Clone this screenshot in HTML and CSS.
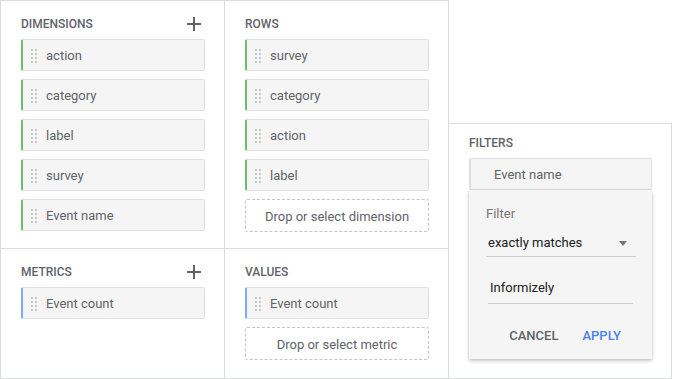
FILE: index.html
```html
<!DOCTYPE html>
<html lang="en">
<head>
<meta charset="utf-8">
<title>Exploration editor</title>
<link rel="stylesheet" href="styles.css">
</head>
<body>
<div class="editor">
  <div class="grid">
    <section class="cell">
      <div class="head"><span>DIMENSIONS</span>
        <svg class="add" width="14" height="14" viewBox="0 0 14 14"><path d="M7 0v14M0 7h14" stroke="#5f6368" stroke-width="2" fill="none"/></svg>
      </div>
      <div class="list">
        <div class="chip dim"><svg class="handle" width="6" height="14" viewBox="0 0 6 14"><g fill="#c4c4c4"><rect x="0" y="0" width="2" height="2"/><rect x="4" y="0" width="2" height="2"/><rect x="0" y="4" width="2" height="2"/><rect x="4" y="4" width="2" height="2"/><rect x="0" y="8" width="2" height="2"/><rect x="4" y="8" width="2" height="2"/><rect x="0" y="12" width="2" height="2"/><rect x="4" y="12" width="2" height="2"/></g></svg><span>action</span></div>
        <div class="chip dim"><svg class="handle" width="6" height="14" viewBox="0 0 6 14"><g fill="#c4c4c4"><rect x="0" y="0" width="2" height="2"/><rect x="4" y="0" width="2" height="2"/><rect x="0" y="4" width="2" height="2"/><rect x="4" y="4" width="2" height="2"/><rect x="0" y="8" width="2" height="2"/><rect x="4" y="8" width="2" height="2"/><rect x="0" y="12" width="2" height="2"/><rect x="4" y="12" width="2" height="2"/></g></svg><span>category</span></div>
        <div class="chip dim"><svg class="handle" width="6" height="14" viewBox="0 0 6 14"><g fill="#c4c4c4"><rect x="0" y="0" width="2" height="2"/><rect x="4" y="0" width="2" height="2"/><rect x="0" y="4" width="2" height="2"/><rect x="4" y="4" width="2" height="2"/><rect x="0" y="8" width="2" height="2"/><rect x="4" y="8" width="2" height="2"/><rect x="0" y="12" width="2" height="2"/><rect x="4" y="12" width="2" height="2"/></g></svg><span>label</span></div>
        <div class="chip dim"><svg class="handle" width="6" height="14" viewBox="0 0 6 14"><g fill="#c4c4c4"><rect x="0" y="0" width="2" height="2"/><rect x="4" y="0" width="2" height="2"/><rect x="0" y="4" width="2" height="2"/><rect x="4" y="4" width="2" height="2"/><rect x="0" y="8" width="2" height="2"/><rect x="4" y="8" width="2" height="2"/><rect x="0" y="12" width="2" height="2"/><rect x="4" y="12" width="2" height="2"/></g></svg><span>survey</span></div>
        <div class="chip dim"><svg class="handle" width="6" height="14" viewBox="0 0 6 14"><g fill="#c4c4c4"><rect x="0" y="0" width="2" height="2"/><rect x="4" y="0" width="2" height="2"/><rect x="0" y="4" width="2" height="2"/><rect x="4" y="4" width="2" height="2"/><rect x="0" y="8" width="2" height="2"/><rect x="4" y="8" width="2" height="2"/><rect x="0" y="12" width="2" height="2"/><rect x="4" y="12" width="2" height="2"/></g></svg><span>Event name</span></div>
      </div>
    </section>
    <section class="cell">
      <div class="head"><span>ROWS</span></div>
      <div class="list">
        <div class="chip dim"><svg class="handle" width="6" height="14" viewBox="0 0 6 14"><g fill="#c4c4c4"><rect x="0" y="0" width="2" height="2"/><rect x="4" y="0" width="2" height="2"/><rect x="0" y="4" width="2" height="2"/><rect x="4" y="4" width="2" height="2"/><rect x="0" y="8" width="2" height="2"/><rect x="4" y="8" width="2" height="2"/><rect x="0" y="12" width="2" height="2"/><rect x="4" y="12" width="2" height="2"/></g></svg><span>survey</span></div>
        <div class="chip dim"><svg class="handle" width="6" height="14" viewBox="0 0 6 14"><g fill="#c4c4c4"><rect x="0" y="0" width="2" height="2"/><rect x="4" y="0" width="2" height="2"/><rect x="0" y="4" width="2" height="2"/><rect x="4" y="4" width="2" height="2"/><rect x="0" y="8" width="2" height="2"/><rect x="4" y="8" width="2" height="2"/><rect x="0" y="12" width="2" height="2"/><rect x="4" y="12" width="2" height="2"/></g></svg><span>category</span></div>
        <div class="chip dim"><svg class="handle" width="6" height="14" viewBox="0 0 6 14"><g fill="#c4c4c4"><rect x="0" y="0" width="2" height="2"/><rect x="4" y="0" width="2" height="2"/><rect x="0" y="4" width="2" height="2"/><rect x="4" y="4" width="2" height="2"/><rect x="0" y="8" width="2" height="2"/><rect x="4" y="8" width="2" height="2"/><rect x="0" y="12" width="2" height="2"/><rect x="4" y="12" width="2" height="2"/></g></svg><span>action</span></div>
        <div class="chip dim"><svg class="handle" width="6" height="14" viewBox="0 0 6 14"><g fill="#c4c4c4"><rect x="0" y="0" width="2" height="2"/><rect x="4" y="0" width="2" height="2"/><rect x="0" y="4" width="2" height="2"/><rect x="4" y="4" width="2" height="2"/><rect x="0" y="8" width="2" height="2"/><rect x="4" y="8" width="2" height="2"/><rect x="0" y="12" width="2" height="2"/><rect x="4" y="12" width="2" height="2"/></g></svg><span>label</span></div>
        <div class="drop">Drop or select dimension</div>
      </div>
    </section>
    <section class="cell">
      <div class="head"><span>METRICS</span>
        <svg class="add" width="14" height="14" viewBox="0 0 14 14"><path d="M7 0v14M0 7h14" stroke="#5f6368" stroke-width="2" fill="none"/></svg>
      </div>
      <div class="list">
        <div class="chip met"><svg class="handle" width="6" height="14" viewBox="0 0 6 14"><g fill="#c4c4c4"><rect x="0" y="0" width="2" height="2"/><rect x="4" y="0" width="2" height="2"/><rect x="0" y="4" width="2" height="2"/><rect x="4" y="4" width="2" height="2"/><rect x="0" y="8" width="2" height="2"/><rect x="4" y="8" width="2" height="2"/><rect x="0" y="12" width="2" height="2"/><rect x="4" y="12" width="2" height="2"/></g></svg><span>Event count</span></div>
      </div>
    </section>
    <section class="cell">
      <div class="head"><span>VALUES</span></div>
      <div class="list">
        <div class="chip met"><svg class="handle" width="6" height="14" viewBox="0 0 6 14"><g fill="#c4c4c4"><rect x="0" y="0" width="2" height="2"/><rect x="4" y="0" width="2" height="2"/><rect x="0" y="4" width="2" height="2"/><rect x="4" y="4" width="2" height="2"/><rect x="0" y="8" width="2" height="2"/><rect x="4" y="8" width="2" height="2"/><rect x="0" y="12" width="2" height="2"/><rect x="4" y="12" width="2" height="2"/></g></svg><span>Event count</span></div>
        <div class="drop">Drop or select metric</div>
      </div>
    </section>
  </div>
  <div class="side">
    <section class="filters">
      <div class="head"><span>FILTERS</span></div>
      <div class="chip plain"><svg class="handle hidden" width="6" height="14" viewBox="0 0 6 14"></svg><span>Event name</span></div>
      <div class="popup">
        <div class="label">Filter</div>
        <div class="select"><span>exactly matches</span><span class="caret"></span></div>
        <div class="field">Informizely</div>
        <div class="actions">
          <button class="btn cancel">CANCEL</button>
          <button class="btn apply">APPLY</button>
        </div>
      </div>
    </section>
  </div>
</div>
</body>
</html>
```

FILE: styles.css
```css
body {
  margin: 0;
  background: #ffffff;
  font-family: Roboto, "Noto Sans", Arial, sans-serif;
  color: #5f6368;
}

.editor {
  display: flex;
  align-items: flex-start;
  width: 673px;
  height: 379px;
}

.grid {
  display: grid;
  grid-template-columns: 224px 224px;
  grid-template-rows: 248px 130px;
  border-left: 1px solid #dadce0;
  border-top: 1px solid #dadce0;
}

.cell {
  box-sizing: border-box;
  border-right: 1px solid #dadce0;
  border-bottom: 1px solid #dadce0;
  padding: 15px 19px 0 20px;
}

.head {
  display: flex;
  justify-content: space-between;
  align-items: center;
  height: 16px;
  margin-bottom: 7px;
  font-size: 12px;
  font-weight: 500;
  line-height: 16px;
  color: #5f6368;
}

.add {
  display: block;
  margin: -1px 4px 0 0;
}

.list {
  display: flex;
  flex-direction: column;
  gap: 8px;
}

.chip {
  display: flex;
  align-items: center;
  box-sizing: border-box;
  height: 32px;
  padding: 1px 0 0 8px;
  background: #f5f5f5;
  border: 1px solid #e0e0e0;
  border-left: 2px solid #e0e0e0;
  border-radius: 2px;
  font-size: 13px;
  line-height: 16px;
  color: #5f6368;
}

.chip.dim {
  border-left-color: #6abf69;
}

.chip.met {
  border-left-color: #7baaf7;
}

.handle {
  display: block;
  flex: none;
  margin-right: 9px;
}

.handle.hidden {
  visibility: hidden;
}

.drop {
  display: flex;
  align-items: center;
  justify-content: center;
  box-sizing: border-box;
  height: 33px;
  padding-top: 1px;
  border: 1px dashed #c4c4c4;
  border-radius: 2px;
  font-size: 13px;
  color: #5f6368;
}

.side {
  flex: none;
  width: 223px;
}

.filters {
  box-sizing: border-box;
  height: 256px;
  margin-top: 123px;
  padding: 11px 19px 0 20px;
  border-top: 1px solid #dadce0;
  border-right: 1px solid #dadce0;
  border-bottom: 1px solid #dadce0;
}

.filters .head {
  margin-bottom: 7px;
}

.popup {
  background: #f5f5f5;
  padding: 16px 16px 15px 17px;
  box-shadow: 0 2px 4px rgba(0, 0, 0, 0.22), 0 0 2px rgba(0, 0, 0, 0.08);
  font-size: 13px;
  line-height: 16px;
}

.label {
  color: #757575;
}

.select {
  display: flex;
  justify-content: space-between;
  align-items: center;
  margin-top: 13px;
  padding: 0 9px 5px 2px;
  border-bottom: 1px solid #cfcfcf;
  color: #202124;
}

.caret {
  width: 0;
  height: 0;
  border-left: 4px solid transparent;
  border-right: 4px solid transparent;
  border-top: 5px solid #757575;
}

.field {
  margin: 23px 3px 0 2px;
  padding: 0 0 7px 2px;
  border-bottom: 1px solid #cfcfcf;
  color: #202124;
}

.actions {
  display: flex;
  justify-content: flex-end;
  gap: 24px;
  margin-top: 24px;
  padding-right: 15px;
}

.btn {
  padding: 0;
  border: none;
  background: none;
  font-family: inherit;
  font-size: 13px;
  font-weight: 500;
  line-height: 16px;
  cursor: pointer;
}

.cancel {
  color: #5f6368;
}

.apply {
  color: #4a80f0;
}
```
